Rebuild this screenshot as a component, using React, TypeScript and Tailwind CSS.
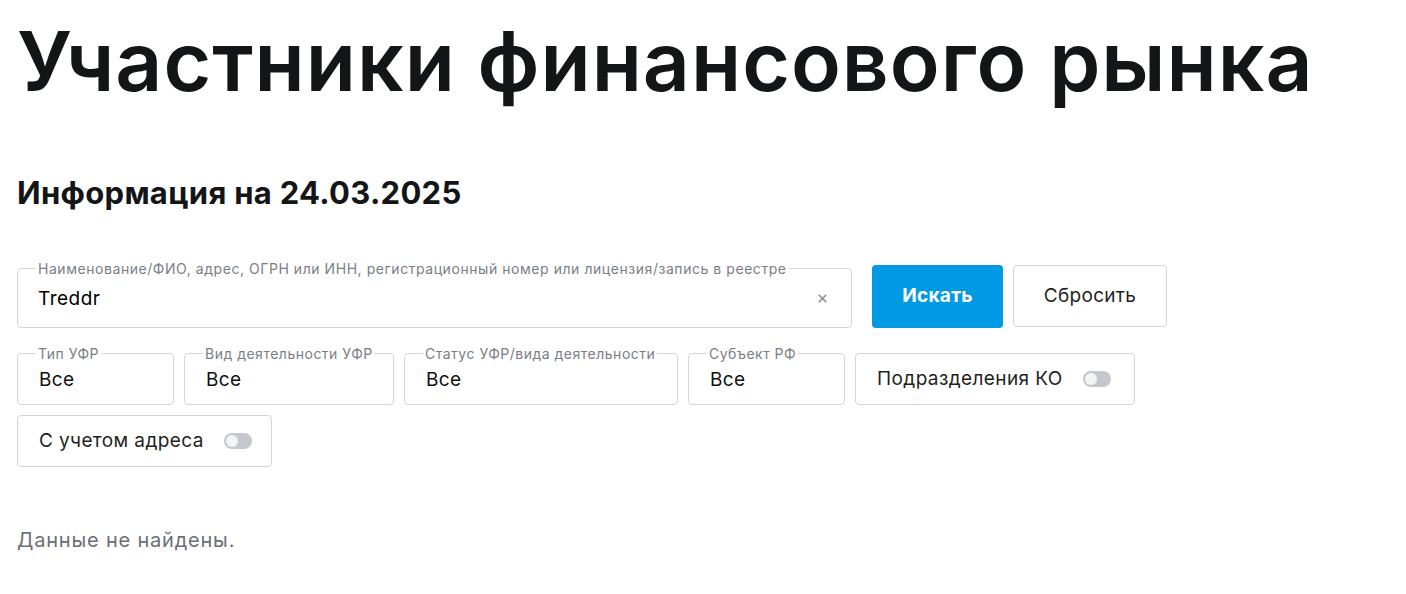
import { X } from "lucide-react"

function Toggle() {
    return (
        <span className="inline-flex h-[16px] w-[28px] shrink-0 items-center rounded-full bg-[#c5c7cc] p-[2px]">
            <span className="h-[12px] w-[12px] rounded-full bg-[#f3f4f5]" />
        </span>
    )
}

function SelectField({ label, value, width }: { label: string; value: string; width: string }) {
    return (
        <div className={`relative flex h-[52px] items-center rounded-[4px] border border-[#d3d5d9] px-[21px] ${width}`}>
            <span className="absolute -top-[9px] left-[18px] whitespace-nowrap bg-white px-[2px] text-[14px] leading-[18px] tracking-[0.5px] text-[#7a7e85]">
                {label}
            </span>
            <span className="pt-[2px] text-[19px] tracking-[0.4px] text-[#111]">{value}</span>
        </div>
    )
}

function ToggleField({ label, width }: { label: string; width: string }) {
    return (
        <div className={`flex h-[52px] items-center gap-[20px] rounded-[4px] border border-[#d3d5d9] pl-[21px] pr-[10px] ${width}`}>
            <span className="whitespace-nowrap text-[19px] tracking-[0.4px] text-[#1d1f23]">{label}</span>
            <Toggle />
        </div>
    )
}

export default function App() {
    return (
        <div className="min-h-screen bg-white px-[17px] font-['Inter',sans-serif] text-[#141517]">
            <h1 className="whitespace-nowrap pt-[21px] text-[82px] font-semibold leading-[82px] tracking-[1px]">
                Участники финансового рынка
            </h1>

            <h2 className="mt-[70px] text-[31px] font-bold leading-[40px] tracking-[0.3px]">Информация на 24.03.2025</h2>

            <div className="mt-[52px] flex items-start gap-[10px]">
                <div className="relative mt-[3px] flex h-[60px] w-[835px] items-center rounded-[4px] border border-[#d3d5d9] pl-[20px] pr-[22px]">
                    <span className="absolute -top-[9px] left-[18px] whitespace-nowrap bg-white px-[2px] text-[14px] leading-[18px] tracking-[0.55px] text-[#7a7e85]">
                        Наименование/ФИО, адрес, ОГРН или ИНН, регистрационный номер или лицензия/запись в реестре
                    </span>
                    <span className="flex-1 pt-[2px] text-[19px] tracking-[0.5px] text-black">Treddr</span>
                    <X size={13} strokeWidth={3} className="text-[#8a8d93]" />
                </div>
                <div className="ml-[10px] flex h-[63px] w-[131px] items-center justify-center rounded-[4px] bg-[#0099e3] text-[19px] font-bold tracking-[0.3px] text-white">
                    Искать
                </div>
                <div className="flex h-[62px] w-[154px] items-center justify-center rounded-[4px] border border-[#d3d5d9] text-[19px] tracking-[0.3px] text-[#1d1f23]">
                    Сбросить
                </div>
            </div>

            <div className="mt-[25px] flex w-[1130px] flex-wrap gap-[10px]">
                <SelectField label="Тип УФР" value="Все" width="w-[157px]" />
                <SelectField label="Вид деятельности УФР" value="Все" width="w-[210px]" />
                <SelectField label="Статус УФР/вида деятельности" value="Все" width="w-[274px]" />
                <SelectField label="Субъект РФ" value="Все" width="w-[157px]" />
                <ToggleField label="Подразделения КО" width="w-[280px]" />
                <ToggleField label="С учетом адреса" width="w-[255px]" />
            </div>

            <p className="mt-[58px] text-[20px] tracking-[0.8px] text-[#6b6f76]">Данные не найдены.</p>
        </div>
    )
}
